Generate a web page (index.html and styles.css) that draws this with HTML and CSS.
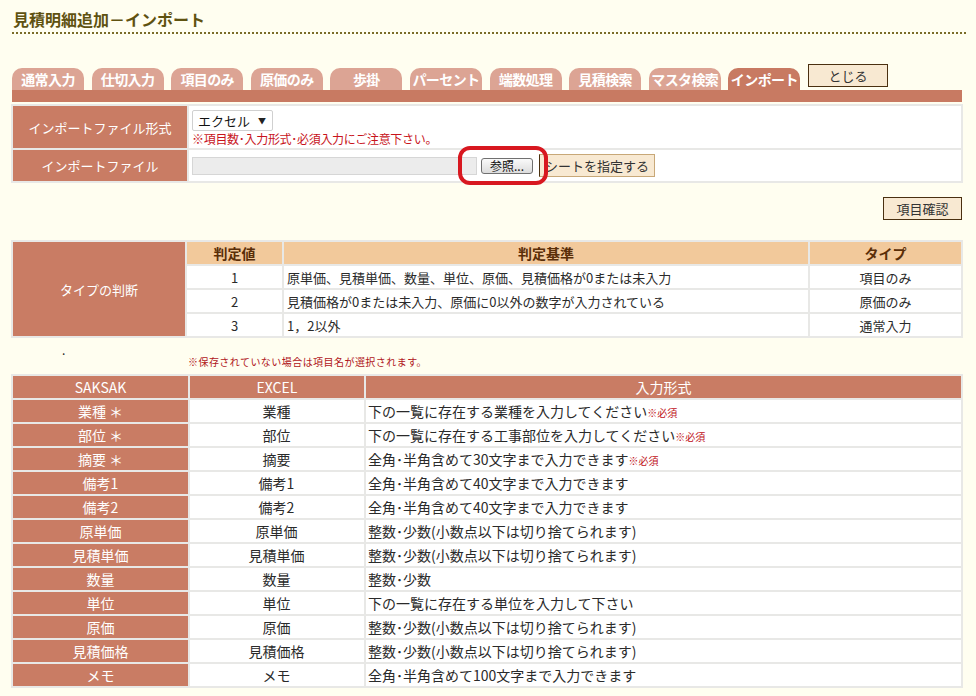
FILE: index.html
```html
<!DOCTYPE html>
<html lang="ja">
<head>
<meta charset="utf-8">
<title>見積明細追加－インポート</title>
<link rel="stylesheet" href="styles.css">
</head>
<body>
<div class="page">
  <h1 class="title">見積明細追加－インポート</h1>

  <div class="tabs">
    <div class="tab">通常入力</div>
    <div class="tab">仕切入力</div>
    <div class="tab">項目のみ</div>
    <div class="tab">原価のみ</div>
    <div class="tab">歩掛</div>
    <div class="tab">パーセント</div>
    <div class="tab">端数処理</div>
    <div class="tab">見積検索</div>
    <div class="tab">マスタ検索</div>
    <div class="tab active">インポート</div>
    <button class="btn close-btn">とじる</button>
  </div>
  <div class="bar"></div>

  <table class="grid form-table">
    <tr class="row-format">
      <td class="label">インポートファイル形式</td>
      <td class="value top">
        <div class="select"><span>エクセル</span><span class="arrow">▼</span></div>
        <div class="warn">※項目数･入力形式･必須入力にご注意下さい。</div>
      </td>
    </tr>
    <tr class="row-file">
      <td class="label">インポートファイル</td>
      <td class="value">
        <div class="file-row">
          <span class="file-box"></span>
          <button class="browse">参照...</button>
          <button class="btn sheet-btn">シートを指定する</button>
          <span class="highlight"></span>
        </div>
      </td>
    </tr>
  </table>

  <div class="confirm-row">
    <button class="btn confirm-btn">項目確認</button>
  </div>

  <table class="grid judge-table">
    <tr>
      <td class="label judge-label" rowspan="4">タイプの判断</td>
      <th class="head c-val">判定値</th>
      <th class="head c-crit">判定基準</th>
      <th class="head c-type">タイプ</th>
    </tr>
    <tr>
      <td class="cell center">1</td>
      <td class="cell">原単価、見積単価、数量、単位、原価、見積価格が0または未入力</td>
      <td class="cell center">項目のみ</td>
    </tr>
    <tr>
      <td class="cell center">2</td>
      <td class="cell">見積価格が0または未入力、原価に0以外の数字が入力されている</td>
      <td class="cell center">原価のみ</td>
    </tr>
    <tr>
      <td class="cell center">3</td>
      <td class="cell">1，2以外</td>
      <td class="cell center">通常入力</td>
    </tr>
  </table>

  <div class="notes">
    <div class="dot">.</div>
    <div class="note">※保存されていない場合は項目名が選択されます。</div>
  </div>

  <table class="grid main-table">
    <tr>
      <td class="label m-a">SAKSAK</td>
      <td class="label m-b">EXCEL</td>
      <td class="label m-c">入力形式</td>
    </tr>
    <tr><td class="label">業種 ＊</td><td class="cell center">業種</td><td class="cell">下の一覧に存在する業種を入力してください<span class="req">※必須</span></td></tr>
    <tr><td class="label">部位 ＊</td><td class="cell center">部位</td><td class="cell">下の一覧に存在する工事部位を入力してください<span class="req">※必須</span></td></tr>
    <tr><td class="label">摘要 ＊</td><td class="cell center">摘要</td><td class="cell">全角･半角含めて30文字まで入力できます<span class="req">※必須</span></td></tr>
    <tr><td class="label">備考1</td><td class="cell center">備考1</td><td class="cell">全角･半角含めて40文字まで入力できます</td></tr>
    <tr><td class="label">備考2</td><td class="cell center">備考2</td><td class="cell">全角･半角含めて40文字まで入力できます</td></tr>
    <tr><td class="label">原単価</td><td class="cell center">原単価</td><td class="cell">整数･少数(小数点以下は切り捨てられます)</td></tr>
    <tr><td class="label">見積単価</td><td class="cell center">見積単価</td><td class="cell">整数･少数(小数点以下は切り捨てられます)</td></tr>
    <tr><td class="label">数量</td><td class="cell center">数量</td><td class="cell">整数･少数</td></tr>
    <tr><td class="label">単位</td><td class="cell center">単位</td><td class="cell">下の一覧に存在する単位を入力して下さい</td></tr>
    <tr><td class="label">原価</td><td class="cell center">原価</td><td class="cell">整数･少数(小数点以下は切り捨てられます)</td></tr>
    <tr><td class="label">見積価格</td><td class="cell center">見積価格</td><td class="cell">整数･少数(小数点以下は切り捨てられます)</td></tr>
    <tr><td class="label">メモ</td><td class="cell center">メモ</td><td class="cell">全角･半角含めて100文字まで入力できます</td></tr>
  </table>
</div>
</body>
</html>
```

FILE: styles.css
```css
* { box-sizing: border-box; }

body {
  margin: 0;
  background: #fffef0;
  font-family: "Noto Sans CJK JP", "Liberation Sans", sans-serif;
  color: #222;
}

.page {
  padding: 8px 0 0 12px;
  width: 966px;
}

.title {
  margin: 0;
  font-size: 16px;
  font-weight: bold;
  color: #5f5210;
  line-height: 22px;
  padding: 0 0 2px 1px;
  border-bottom: 2px dotted #7a6c28;
}

.tabs {
  display: flex;
  align-items: flex-end;
  gap: 7.6px;
  margin-top: 30px;
  width: 950px;
}

.tab {
  width: 72px;
  height: 22px;
  border-radius: 10px 10px 0 0;
  background: #dca494;
  color: #fff;
  font-weight: bold;
  font-size: 14px;
  text-align: center;
  line-height: 22px;
  letter-spacing: -0.6px;
  white-space: nowrap;
}

.tab.active { background: #c87a62; }

.btn {
  font-family: inherit;
  background: #f8e9d2;
  border: 1px solid #4a3010;
  color: #333;
  padding: 0;
  cursor: pointer;
}

.close-btn {
  width: 80px;
  height: 23px;
  margin-bottom: 3px;
  font-size: 13px;
}

.bar {
  height: 12px;
  width: 950px;
  background: #c87a62;
}

.grid {
  border-spacing: 2px;
  background: #e8e8e6;
  margin-left: -1px;
  width: 952px;
  table-layout: fixed;
}

.grid td, .grid th {
  padding: 0;
}

.label {
  background: #c97c64;
  color: #fff;
  text-align: center;
  font-size: 13px;
  font-weight: normal;
}

.value {
  background: #fff;
  padding: 0 3px !important;
  vertical-align: middle;
}

.value.top {
  vertical-align: top;
  padding-top: 4px !important;
}

.form-table { margin-top: 2px; }
.form-table .label { width: 174px; }
.row-format td { height: 42px; }
.row-file td { height: 31px; }

.select {
  display: flex;
  align-items: center;
  justify-content: space-between;
  width: 81px;
  height: 21px;
  padding: 0 6px 0 5px;
  background: #fff;
  border: 1px solid #d0d0d0;
  border-radius: 2px;
  font-size: 13px;
  color: #111;
}

.select .arrow {
  font-size: 8px;
  color: #222;
}

.warn {
  color: #c8141c;
  font-size: 12px;
  line-height: 13px;
  margin-top: 1px;
  letter-spacing: -0.3px;
}

.file-row {
  position: relative;
  display: flex;
  align-items: center;
}

.file-box {
  width: 285px;
  height: 18px;
  background: #ececec;
  border: 1px solid #d6d6d6;
}

.browse {
  margin-left: 4px;
  width: 52px;
  height: 16px;
  padding: 0;
  font-family: inherit;
  font-size: 12px;
  line-height: 14px;
  color: #111;
  border: 1px solid #707070;
  border-radius: 3px;
  background: linear-gradient(#fafafa, #dcdcdc);
}

.sheet-btn {
  margin-left: 6px;
  width: 116px;
  height: 23px;
  font-size: 13px;
  border-color: #c8a878;
  border-left-color: #4a3010;
}

.highlight {
  position: absolute;
  left: 266px;
  top: -8px;
  width: 90px;
  height: 39px;
  border: 4px solid #d81820;
  border-radius: 12px;
  pointer-events: none;
}

.confirm-row {
  display: flex;
  justify-content: flex-end;
  width: 950px;
  margin-top: 14px;
}

.confirm-btn {
  width: 79px;
  height: 23px;
  font-size: 13px;
}

.judge-table { margin-top: 20px; }
.judge-label { width: 172px; }
.c-val { width: 95px; }
.c-type { width: 151px; }

.head {
  background: #f2c99b;
  color: #5a2e08;
  font-size: 14px;
  font-weight: bold;
  height: 22px;
  text-align: center;
}

.cell {
  background: #fff;
  height: 22px;
  font-size: 13px;
  padding: 0 3px !important;
  white-space: nowrap;
  overflow: hidden;
  color: #2a2a2a;
}

.center { text-align: center; }

.notes {
  height: 36px;
  padding-top: 6px;
}

.dot {
  font-size: 12px;
  line-height: 12px;
  padding-left: 50px;
  color: #222;
}

.note {
  font-size: 10px;
  line-height: 12px;
  padding-left: 176px;
  color: #b0151a;
  letter-spacing: 0.45px;
}

.main-table td { height: 22px; }
.main-table .label { font-size: 14px; }
.main-table .cell { font-size: 14px; padding-left: 2px !important; }
.m-a { width: 175px; }
.m-b { width: 174px; }

.req {
  color: #c01018;
  font-size: 10px;
}
```
